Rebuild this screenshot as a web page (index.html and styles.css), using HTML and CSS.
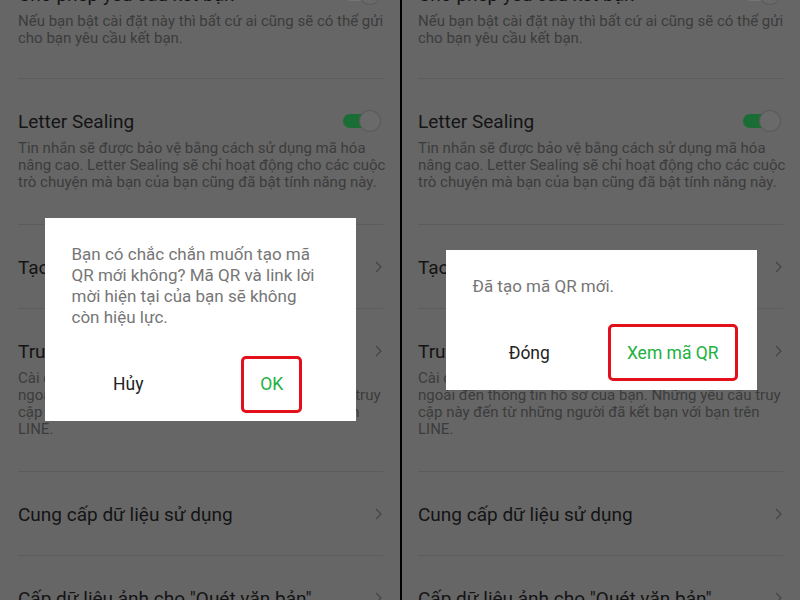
FILE: index.html
```html
<!DOCTYPE html>
<html>
  <head>
    <meta charset="utf-8" />
    <meta name="viewport" content="width=device-width, initial-scale=1" />
    <link rel="stylesheet" href="styles.css">
  </head>
  <body>
    <div class="shots">
      <!-- step 1: confirm -->
      <div class="screen">
        <ul class="settings">
          <li class="item">
            <div class="item-head">
              <span class="item-title">Cho phép yêu cầu kết bạn</span>
              <span class="toggle toggle-off"></span>
            </div>
            <p class="item-desc">Nếu bạn bật cài đặt này thì bất cứ ai cũng sẽ có thể gửi cho bạn yêu cầu kết bạn.</p>
          </li>
          <li class="item">
            <div class="item-head">
              <span class="item-title">Letter Sealing</span>
              <span class="toggle"></span>
            </div>
            <p class="item-desc">Tin nhắn sẽ được bảo vệ bằng cách sử dụng mã hóa nâng cao. Letter Sealing sẽ chỉ hoạt động cho các cuộc trò chuyện mà bạn của bạn cũng đã bật tính năng này.</p>
          </li>
          <li class="item">
            <div class="item-head">
              <span class="item-title">Tạo lại mã QR</span>
              <svg class="chevron" viewBox="0 0 7 12"><polyline points="1,1 6,6 1,11" /></svg>
            </div>
          </li>
          <li class="item">
            <div class="item-head">
              <span class="item-title">Truy cập thông tin hồ sơ</span>
              <svg class="chevron" viewBox="0 0 7 12"><polyline points="1,1 6,6 1,11" /></svg>
            </div>
            <p class="item-desc">Cài đặt cho phép yêu cầu truy cập từ các ứng dụng ngoài đến thông tin hồ sơ của bạn. Những yêu cầu truy cập này đến từ những người đã kết bạn với bạn trên LINE.</p>
          </li>
          <li class="item">
            <div class="item-head">
              <span class="item-title">Cung cấp dữ liệu sử dụng</span>
              <svg class="chevron" viewBox="0 0 7 12"><polyline points="1,1 6,6 1,11" /></svg>
            </div>
          </li>
          <li class="item">
            <div class="item-head">
              <span class="item-title">Cấp dữ liệu ảnh cho "Quét văn bản"</span>
              <svg class="chevron" viewBox="0 0 7 12"><polyline points="1,1 6,6 1,11" /></svg>
            </div>
          </li>
        </ul>

        <div class="overlay">
          <div class="dialog">
            <p class="dialog-msg">Bạn có chắc chắn muốn tạo mã QR mới không? Mã QR và link lời mời hiện tại của bạn sẽ không còn hiệu lực.</p>
            <div class="dialog-actions">
              <button class="btn">Hủy</button>
              <button class="btn btn-primary"><span class="marked">OK</span></button>
            </div>
          </div>
        </div>
      </div>

      <!-- step 2: done -->
      <div class="screen">
        <ul class="settings">
          <li class="item">
            <div class="item-head">
              <span class="item-title">Cho phép yêu cầu kết bạn</span>
              <span class="toggle toggle-off"></span>
            </div>
            <p class="item-desc">Nếu bạn bật cài đặt này thì bất cứ ai cũng sẽ có thể gửi cho bạn yêu cầu kết bạn.</p>
          </li>
          <li class="item">
            <div class="item-head">
              <span class="item-title">Letter Sealing</span>
              <span class="toggle"></span>
            </div>
            <p class="item-desc">Tin nhắn sẽ được bảo vệ bằng cách sử dụng mã hóa nâng cao. Letter Sealing sẽ chỉ hoạt động cho các cuộc trò chuyện mà bạn của bạn cũng đã bật tính năng này.</p>
          </li>
          <li class="item">
            <div class="item-head">
              <span class="item-title">Tạo lại mã QR</span>
              <svg class="chevron" viewBox="0 0 7 12"><polyline points="1,1 6,6 1,11" /></svg>
            </div>
          </li>
          <li class="item">
            <div class="item-head">
              <span class="item-title">Truy cập thông tin hồ sơ</span>
              <svg class="chevron" viewBox="0 0 7 12"><polyline points="1,1 6,6 1,11" /></svg>
            </div>
            <p class="item-desc">Cài đặt cho phép yêu cầu truy cập từ các ứng dụng ngoài đến thông tin hồ sơ của bạn. Những yêu cầu truy cập này đến từ những người đã kết bạn với bạn trên LINE.</p>
          </li>
          <li class="item">
            <div class="item-head">
              <span class="item-title">Cung cấp dữ liệu sử dụng</span>
              <svg class="chevron" viewBox="0 0 7 12"><polyline points="1,1 6,6 1,11" /></svg>
            </div>
          </li>
          <li class="item">
            <div class="item-head">
              <span class="item-title">Cấp dữ liệu ảnh cho "Quét văn bản"</span>
              <svg class="chevron" viewBox="0 0 7 12"><polyline points="1,1 6,6 1,11" /></svg>
            </div>
          </li>
        </ul>

        <div class="overlay">
          <div class="dialog">
            <p class="dialog-msg">Đã tạo mã QR mới.</p>
            <div class="dialog-actions">
              <button class="btn">Đóng</button>
              <button class="btn btn-primary"><span class="marked">Xem mã QR</span></button>
            </div>
          </div>
        </div>
      </div>
    </div>
  </body>
</html>
```

FILE: styles.css
```css
* {
  box-sizing: border-box;
}
html,
body {
  margin: 0;
}
body {
  background: #000;
  font-family: Roboto, "Noto Sans", sans-serif;
}

.shots {
  display: grid;
  grid-template-columns: 400px 398px;
  gap: 2px;
  height: 600px;
  overflow: hidden;
}

/* settings list, already dimmed behind the dialog */
.screen {
  position: relative;
  overflow: hidden;
  background: #666;
  padding: 0 17px 0 18px;
}
.screen + .screen {
  padding-left: 16px;
}

.settings {
  list-style: none;
  margin: -48px 0 0;
  padding: 0;
}
.item {
  padding: 30px 0 29px;
  border-bottom: 1px solid #5c5c5c;
}
.item:first-child {
  padding-bottom: 27px;
}
.item-head {
  display: flex;
  align-items: center;
  justify-content: space-between;
  height: 24px;
}
.item-title {
  font-size: 19px;
  color: #141414;
  white-space: nowrap;
}
.item-desc {
  margin: 7px -9px 4px 0;
  font-size: 15px;
  line-height: 17px;
  color: #3c3c3c;
}

.toggle {
  position: relative;
  flex: none;
  width: 34px;
  height: 14px;
  margin-right: 6px;
  border-radius: 7px;
  background: #1b6d36;
}
.toggle::after {
  content: "";
  position: absolute;
  top: -3px;
  right: -3px;
  width: 20px;
  height: 20px;
  border-radius: 50%;
  background: #6a6a6a;
  box-shadow: 0 0 0 1px #5b5b5b;
}
.toggle-off {
  background: #737373;
}

.chevron {
  flex: none;
  width: 7px;
  height: 12px;
  margin-right: 1px;
  fill: none;
  stroke: #454545;
  stroke-width: 1.3;
}

/* dialog */
.overlay {
  position: absolute;
  inset: 0;
  display: flex;
  align-items: center;
  justify-content: center;
  padding-top: 39px;
}
.dialog {
  width: 311px;
  background: #fff;
  padding: 26px 12px 8px;
}
.dialog-msg {
  margin: 0 15px;
  font-size: 17px;
  line-height: 21px;
  color: #767676;
}
.dialog-actions {
  display: flex;
  margin-top: 27px;
}
.btn {
  flex: 1;
  display: flex;
  align-items: center;
  justify-content: center;
  height: 58px;
  padding: 0;
  border: 0;
  background: none;
  font-family: inherit;
  font-size: 17.5px;
  color: #222;
}
.btn-primary {
  color: #22b13f;
}
.marked {
  display: flex;
  align-items: center;
  height: 57px;
  padding: 0 16px;
  border: 3px solid #e3101b;
  border-radius: 5px;
}
```
